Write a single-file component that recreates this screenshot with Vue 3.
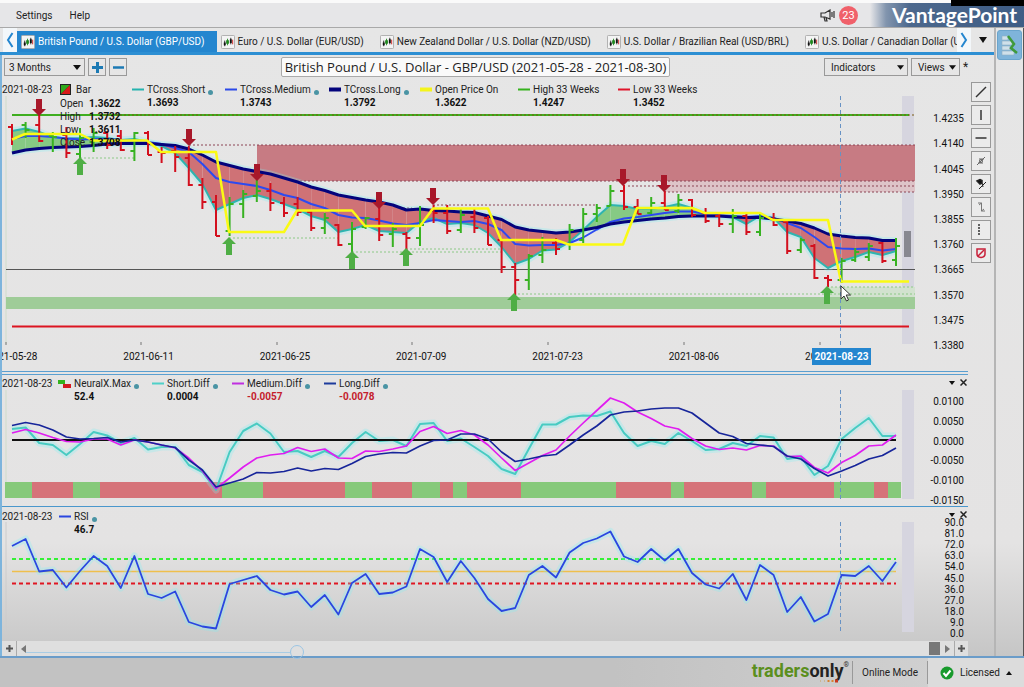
<script setup>
const STEP = 13.6
const START = 12
const px = (k) => START + k * STEP
const toPoints = (values) => values.map((y, k) => `${px(k).toFixed(1)},${y}`).join(' ')

const tabs = [
  'British Pound / U.S. Dollar (GBP/USD)',
  'Euro / U.S. Dollar (EUR/USD)',
  'New Zealand Dollar / U.S. Dollar (NZD/USD)',
  'U.S. Dollar / Brazilian Real (USD/BRL)',
  'U.S. Dollar / Canadian Dollar (USD/CAD)',
]

const ohlc = [['Open', '1.3622'], ['High', '1.3732'], ['Low', '1.3611'], ['Close', '1.3708']]
const priceLegend = [
  { name: 'TCross.Short', value: '1.3693', color: '#25b3ae', dot: true },
  { name: 'TCross.Medium', value: '1.3743', color: '#2b49e8', dot: true },
  { name: 'TCross.Long', value: '1.3792', color: '#04047c', dot: true, thick: true },
  { name: 'Open Price On', value: '1.3622', color: '#f4f41c', thick: true },
  { name: 'High 33 Weeks', value: '1.4247', color: '#35b21d' },
  { name: 'Low 33 Weeks', value: '1.3452', color: '#e0142a' },
]
const diffLegend = [
  { name: 'Short.Diff', value: '0.0004', color: '#4fd0c8' },
  { name: 'Medium.Diff', value: '-0.0057', color: '#c02fe0', negative: true },
  { name: 'Long.Diff', value: '-0.0078', color: '#1d3b9c', negative: true },
]

const priceTicks = ['1.4235', '1.4140', '1.4045', '1.3950', '1.3855', '1.3760', '1.3665', '1.3570', '1.3475', '1.3380']
const diffTicks = ['0.0100', '0.0050', '0.0000', '-0.0050', '-0.0100', '-0.0150']
const rsiTicks = ['90.0', '81.0', '72.0', '63.0', '54.0', '45.0', '36.0', '27.0', '18.0', '9.0', '0.0']
const dates = ['2021-05-28', '2021-06-11', '2021-06-25', '2021-07-09', '2021-07-23', '2021-08-06', '2021-08-20']
const dateMarks = [6, 141, 277, 412, 548, 684, 820]

const longLine = [153, 150, 148.5, 147.5, 147, 146.5, 145.5, 144, 143.5, 143.5, 143.5, 144.5, 145.5, 149, 155, 162, 165.5, 169, 171.5, 174, 178, 182, 187, 190.5, 195, 197.5, 200, 202, 205, 210, 209, 210.5, 211, 212, 212.5, 216, 219.5, 227, 230, 231.5, 233, 232, 230, 227.5, 224, 222, 220.5, 219, 218, 216.5, 216, 216, 216, 217, 217.5, 217.5, 219, 221, 223.5, 228, 234, 236, 237.5, 238, 240.5, 240.5]
const mediumLine = [139, 136, 136, 137, 138.5, 139.5, 139, 139, 140, 141, 142, 144, 148, 152, 164, 178, 182, 184, 186, 190, 195, 198, 204, 208, 215, 217.5, 218, 220.5, 223.5, 225, 223, 220, 221, 222, 221, 224, 230, 244, 245.5, 245, 245, 243, 237.5, 229.5, 222, 218.5, 217, 215, 213, 211.5, 211.5, 214, 215, 216, 217, 216, 218, 223, 228, 237, 247, 248.5, 249, 248.5, 250.5, 249]
const shortLine = [131, 128.5, 132, 137, 138.5, 138, 137, 138, 140, 139, 142, 146, 153, 168, 184, 210, 204, 198, 195, 199, 204, 209, 216, 220, 232, 229, 225, 231, 232, 233, 222, 218, 224, 223, 225, 233, 247, 264, 259, 250.5, 249.5, 242, 230, 217, 205, 206, 209, 209, 207, 204, 208, 214, 216, 217, 224, 216, 218, 232, 237, 258, 268, 261, 257, 252, 255, 251]
const openLine = '12,139.5 25,134 80,134 93,140.5 147,140.5 161,152 216,152 229,232 284,232 297,210.5 352,210.5 365,226 420,226 433,208.5 488,208.5 501,240 556,240 569,244.5 623,244.5 637,208 692,208 705,213 760,213 773,220 828,220 841,281.5 909,281.5'

const ribbons = longLine.slice(0, -1).map((y, k) => ({
  points: `${px(k)},${y} ${px(k + 1)},${longLine[k + 1]} ${px(k + 1)},${shortLine[k + 1]} ${px(k)},${shortLine[k]}`,
  up: shortLine[k] + shortLine[k + 1] < y + longLine[k + 1],
}))

// [direction, high, low, open tick, close tick]
const bars = [
  ['r', 124, 145, 127, 0], ['g', 122, 138, 125, 130], ['r', 115, 142, 125, 141], ['g', 132, 152, 136, 137],
  ['r', 127, 158, 135, 153], ['g', 128, 158, 154, 138], ['g', 128, 152, 142, 133], ['r', 131, 149, 133, 145],
  ['r', 130, 151, 136, 150], ['g', 132, 161, 151, 133], ['r', 131, 155, 133, 155], ['r', 147, 163, 152, 153],
  ['r', 146, 172, 151, 157], ['r', 146, 186, 158, 185], ['r', 178, 209, 185, 202], ['r', 195, 236, 202, 236],
  ['g', 197, 236, 231, 204], ['g', 190, 218, 204, 194], ['g', 180, 202, 196, 191], ['r', 183, 211, 191, 203],
  ['r', 197, 217, 203, 213], ['r', 197, 216, 204, 212], ['r', 211, 231, 212, 228], ['g', 213, 234, 228, 218],
  ['r', 224, 246, 225, 245], ['g', 222, 254, 244, 229], ['g', 217, 229, 227, 218], ['r', 204, 241, 219, 235],
  ['g', 223, 247, 234, 229], ['r', 232, 250, 234, 238], ['g', 206, 246, 238, 225], ['r', 205, 223, 210, 213],
  ['r', 205, 234, 213, 231], ['g', 209, 233, 230, 215], ['r', 208, 233, 217, 228], ['r', 216, 245, 218, 245],
  ['r', 240, 273, 240, 267], ['r', 263, 295, 267, 280], ['g', 254, 290, 280, 256], ['g', 237, 263, 255, 250],
  ['r', 238, 255, 243, 249], ['g', 224, 250, 244, 230], ['g', 208, 243, 240, 214], ['g', 204, 222, 214, 208],
  ['g', 185, 206, 206, 191], ['r', 185, 210, 191, 207], ['r', 199, 214, 207, 214], ['g', 197, 214, 213, 203],
  ['r', 191, 210, 203, 210], ['g', 194, 213, 211, 200], ['r', 199, 217, 200, 215], ['r', 208, 223, 213, 221],
  ['r', 214, 227, 216, 224], ['g', 209, 233, 224, 216], ['r', 212, 235, 216, 232], ['g', 213, 236, 232, 218],
  ['r', 213, 226, 219, 225], ['r', 221, 254, 222, 251], ['g', 238, 253, 250, 240], ['r', 244, 279, 246, 278],
  ['r', 275, 287, 278, 280], ['g', 258, 283, 280, 261], ['g', 248, 262, 260, 252], ['g', 243, 261, 257, 246],
  ['r', 242, 263, 243, 261], ['g', 238, 266, 260, 246],
]
const barPath = (bar, k) => {
  const x = px(k)
  let d = `M${x} ${bar[1]}V${bar[2]}`
  if (bar[3]) d += `M${x - 4} ${bar[3]}H${x}`
  if (bar[4]) d += `M${x} ${bar[4]}H${x + 4}`
  return d
}

const downArrows = [[39, 116], [189, 146], [257, 181], [379, 209], [433, 205], [623, 186], [664, 192]]
const upArrows = [[80, 157], [229, 237], [352, 251], [406, 248], [514, 293], [827, 286]]

const shortDiff = [429, 427.5, 443, 445, 455, 444, 432, 435.5, 443, 438, 449.5, 447, 447, 465, 472, 490, 452, 431, 423.5, 433.5, 452, 451, 457, 451, 457, 443, 432, 441, 440, 446, 424, 423, 441, 438.5, 447, 456, 469, 474, 449, 424.5, 424.5, 417, 415.5, 416, 411.5, 433, 446, 441, 444, 433, 441, 450, 449, 443, 446, 436, 437.5, 459, 457, 475, 466, 439, 428, 418, 436, 436]
const mediumDiff = [433, 429.5, 433, 437.5, 441.5, 442, 439, 439, 445, 440, 442, 445, 448, 458, 471, 488.5, 478, 467, 458, 455, 453.5, 447.5, 451.5, 449, 458, 458.5, 451, 451.5, 449, 446, 431.5, 426.5, 433.5, 430.5, 435, 445, 458, 470.5, 463, 455.5, 450, 436, 423, 410.5, 398, 403, 412, 418.5, 426, 429, 438.5, 446, 449.5, 448, 450, 445.5, 446, 456.5, 456, 467.5, 473, 462.5, 455.5, 446, 445, 435]
const longDiff = [425.5, 422.5, 425, 430, 437, 439, 438.5, 437.5, 442, 440, 442, 445, 447.5, 460, 470, 487, 483, 479, 472.5, 473, 471.5, 468, 471, 468.5, 469.5, 463.5, 456.5, 454, 452.5, 453, 446, 440.5, 440, 434, 434, 439, 452, 461.5, 459, 456, 454.5, 445, 435, 426, 415, 412, 411, 409, 408, 408, 413, 423, 433, 436.5, 443.5, 445, 446.5, 456, 459, 468.5, 476, 471, 465.5, 459, 455.5, 448]
const rsi = [546, 539, 571.5, 570, 587.5, 571, 556, 566, 588, 556, 594, 598, 591.5, 622, 626.5, 628.5, 584, 580, 576, 590, 594.5, 591.5, 607, 595, 614.5, 583, 574, 594, 592.5, 586.5, 549, 557, 582, 561, 578, 599, 611, 608, 575, 566, 577.5, 552.5, 543, 538.5, 531.5, 556.5, 562, 549, 560.5, 549, 573, 584.5, 588.5, 574, 600, 565, 575, 612, 597, 621.5, 614, 575, 576, 566, 581, 562]

const edges = [5, 32, 73, 100, 222, 263, 345, 372, 412, 440, 453, 467, 521, 616, 671, 684, 752, 766, 834, 874, 888, 901]
const strip = edges.slice(0, -1).map((x, i) => ({ x, w: edges[i + 1] - x, up: i % 2 === 0 }))

const tools = ['Trend line', 'Vertical line', 'Horizontal line', 'Regression', 'Pin', 'Step', 'Levels', 'Clear']
</script>

<template>
  <div class="app">
    <header class="menu">
      <nav>
        <button>Settings</button>
        <button>Help</button>
      </nav>
      <button class="news" aria-label="News">
        <svg width="15" height="13" viewBox="0 0 15 13"><path d="M1 4h4l5-3v9L5 8H1zM4 8l1 4h2L6 8.500M12 3v5M14 2v7" fill="none" stroke="#333" stroke-width="1.200" /></svg>
        <span class="count">23</span>
      </button>
      <div class="brand">VantagePoint</div>
      <div class="cover"></div>
    </header>

    <div class="body">
      <div class="workspace">
        <div class="tabs">
          <button class="nav-arrow" aria-label="Previous tabs">
            <svg width="8" height="18" viewBox="0 0 8 18"><path d="M6.500 2L2 9l4.500 7" fill="none" stroke="#2486cf" stroke-width="2" /></svg>
          </button>
          <div class="tab-list">
            <button v-for="(tab, i) in tabs" :key="tab" class="tab" :class="{ active: i === 0 }">
              <svg width="14" height="14" viewBox="0 0 15 15">
                <rect x=".5" y=".5" width="14" height="14" rx="1" fill="#f4f4f4" stroke="#aaa" />
                <path d="M4 6v6M10.500 3v7" stroke="#222" stroke-width="1" />
                <path d="M3 8h2v3H3zM9.500 4.500h2v4h-2z" fill="#111" />
                <path d="M7 4v7M6 6h2v3H6z" fill="#258a25" stroke="#258a25" />
                <path d="M12.500 5v5" stroke="#c22" />
              </svg>
              <span>{{ tab }}</span>
            </button>
          </div>
          <button class="nav-arrow" aria-label="Next tabs">
            <svg width="8" height="18" viewBox="0 0 8 18"><path d="M1.500 2L6 9l-4.500 7" fill="none" stroke="#2486cf" stroke-width="2" /></svg>
          </button>
          <button class="tab-menu" aria-label="All tabs">
            <svg width="8" height="6" viewBox="0 0 8 6"><path d="M0 0h8L4 6z" fill="#111" /></svg>
          </button>
        </div>

        <div class="content">
          <main>
            <div class="toolbar">
              <div class="pick period">
                <select aria-label="Period"><option>3 Months</option></select>
                <svg width="8" height="5" viewBox="0 0 8 5"><path d="M0 0h8L4 5z" fill="#111" /></svg>
              </div>
              <button class="square" aria-label="Zoom in"><svg width="11" height="11" viewBox="0 0 11 11"><path d="M0 5.500h11M5.500 0v11" stroke="#1c7ab4" stroke-width="3" /></svg></button>
              <button class="square" aria-label="Zoom out"><svg width="11" height="11" viewBox="0 0 11 11"><path d="M0 5.500h11" stroke="#1c7ab4" stroke-width="2.500" /></svg></button>
              <h1>British Pound / U.S. Dollar - GBP/USD (2021-05-28 - 2021-08-30)</h1>
              <div class="pick indicators">
                <select aria-label="Indicators"><option>Indicators</option></select>
                <svg width="7" height="5" viewBox="0 0 8 5"><path d="M0 0h8L4 5z" fill="#111" /></svg>
              </div>
              <div class="pick views">
                <select aria-label="Views"><option>Views</option></select>
                <svg width="7" height="5" viewBox="0 0 8 5"><path d="M0 0h8L4 5z" fill="#111" /></svg>
              </div>
              <span class="star">*</span>
            </div>

            <section class="panel price">
              <div class="plot">
                <svg class="chart" viewBox="2 79 916 267" preserveAspectRatio="none">
                  <path d="M6 96V344" stroke="#cfdccb" />
                  <rect x="902" y="96" width="12" height="248" class="future" />
                  <rect x="257" y="145" width="658" height="36" fill="#c77b83" />
                  <rect x="664" y="181" width="251" height="11" fill="#dec4c8" />
                  <rect x="827" y="287" width="88" height="10" fill="#d2e2cf" />
                  <rect x="6" y="297" width="909" height="12" fill="#9fcc98" />
                  <path class="dots dark" d="M189 145H915M240 181H915M628 186H915M664 192H915M379 208H412M433 205H596" />
                  <path class="dots light" d="M80 158H134M229 238H338M352 252H502M406 249H502M514 294H915M827 287H915" />
                  <path d="M6 269.500H915" stroke="#555" stroke-width="1.200" />
                  <path d="M12 115H909" stroke="#3fae20" stroke-width="2" />
                  <path class="dots" d="M100 115H915" stroke="#7a5a10" />
                  <path d="M12 326.500H909" stroke="#dc1421" stroke-width="2" />
                  <polyline class="glow" :points="toPoints(longLine)" />
                  <polyline class="glow" :points="toPoints(shortLine)" />
                  <polygon v-for="(r, i) in ribbons" :key="i" :points="r.points" :fill="r.up ? '#86ca84' : '#cf7276'" />
                  <polyline class="line" :points="toPoints(shortLine)" stroke="#2fb4b0" stroke-width="2" />
                  <polyline class="line" :points="toPoints(mediumLine)" stroke="#2c4af0" stroke-width="2" />
                  <polyline class="line" :points="toPoints(longLine)" stroke="#04047c" stroke-width="3" />
                  <path v-for="(bar, k) in bars" :key="k" :d="barPath(bar, k)" :stroke="bar[0] === 'r' ? '#d3101e' : '#38b222'" stroke-width="2" fill="none" />
                  <polyline class="line" :points="openLine" stroke="#fafa14" stroke-width="2.500" />
                  <path v-for="a in downArrows" :key="'d' + a[0]" :d="`M${a[0]} ${a[1]}l-7 -7h4v-10h6v10h4z`" fill="#a8182a" />
                  <path v-for="a in upArrows" :key="'u' + a[0]" :d="`M${a[0]} ${a[1]}l-7 7h4v11h6v-11h4z`" fill="#4fae45" />
                  <rect x="904" y="231" width="7" height="26" fill="#888890" />
                  <path class="guide" d="M840.500 96V345" />
                  <path v-for="x in dateMarks" :key="x" :d="`M${x} 345v-3`" stroke="#777" />
                  <path d="M841 286v13l3-3 2.500 5 2-1-2.300-5h4.300z" fill="#fff" stroke="#333" />
                </svg>
                <div class="dates">
                  <span v-for="d in dates" :key="d">{{ d }}</span>
                  <strong class="picked">2021-08-23</strong>
                </div>
                <div class="legend price-legend">
                  <span>2021-08-23</span>
                  <div class="bar-item">
                    <svg width="11" height="11" viewBox="0 0 11 11"><path d="M0 0h11v11H0z" fill="#222" /><path d="M1 1h9l-9 9z" fill="#30a81c" /><path d="M10 1v9H1z" fill="#d81a1a" /></svg>
                    <span>Bar</span>
                    <dl><template v-for="row in ohlc" :key="row[0]"><dt>{{ row[0] }}</dt><dd>{{ row[1] }}</dd></template></dl>
                  </div>
                  <div v-for="item in priceLegend" :key="item.name" class="item">
                    <svg width="12" height="5" viewBox="0 0 12 5"><path d="M0 2.500h12" :stroke="item.color" :stroke-width="item.thick ? 4 : 2" /></svg>
                    <span>{{ item.name }}</span><i v-if="item.dot"></i>
                    <b>{{ item.value }}</b>
                  </div>
                </div>
              </div>
              <div class="axis"><span v-for="t in priceTicks" :key="t">{{ t }}</span></div>
            </section>

            <section class="panel diff">
              <div class="plot">
                <svg class="chart" viewBox="2 375 916 131" preserveAspectRatio="none">
                  <path d="M6 390V498" stroke="#cfdccb" />
                  <rect x="902" y="390" width="12" height="109" class="future" />
                  <rect v-for="s in strip" :key="s.x" :x="s.x" y="482" :width="s.w" height="16" :fill="s.up ? '#86c97a' : '#d67379'" />
                  <polyline class="glow" :points="toPoints(shortDiff)" />
                  <polyline class="line" :points="toPoints(shortDiff)" stroke="#48cbc2" stroke-width="2" />
                  <path d="M12 440H896" stroke="#111" stroke-width="2" />
                  <polyline class="line" :points="toPoints(mediumDiff)" stroke="#e01df0" stroke-width="1.700" />
                  <polyline class="line" :points="toPoints(longDiff)" stroke="#17259a" stroke-width="1.700" />
                  <path class="guide" d="M840.500 390V499" />
                </svg>
                <div class="legend diff-legend">
                  <span>2021-08-23</span>
                  <div class="item">
                    <svg width="13" height="8" viewBox="0 0 13 8"><path d="M0 0h7v4H0z" fill="#35b21d" /><path d="M5 4h8v4H5z" fill="#d4181f" /></svg>
                    <span>NeuralX.Max</span><i></i>
                    <b>52.4</b>
                  </div>
                  <div v-for="item in diffLegend" :key="item.name" class="item">
                    <svg width="12" height="5" viewBox="0 0 12 5"><path d="M0 2.500h12" :stroke="item.color" stroke-width="2" /></svg>
                    <span>{{ item.name }}</span><i></i>
                    <b :class="{ negative: item.negative }">{{ item.value }}</b>
                  </div>
                </div>
              </div>
              <div class="axis"><span v-for="t in diffTicks" :key="t">{{ t }}</span></div>
              <div class="panel-actions">
                <button aria-label="Panel menu"><svg width="6" height="4" viewBox="0 0 6 4"><path d="M0 0h6L3 4z" fill="#111" /></svg></button>
                <button aria-label="Close panel"><svg width="7" height="7" viewBox="0 0 7 7"><path d="M.5.5l6 6M6.500.5l-6 6" stroke="#222" stroke-width="1.500" /></svg></button>
              </div>
            </section>

            <section class="panel rsi">
              <div class="plot">
                <svg class="chart" viewBox="2 507 916 134" preserveAspectRatio="none">
                  <path d="M6 522V633" stroke="#ccc" />
                  <rect x="902" y="522" width="12" height="110" class="future" />
                  <path d="M12 559H896" stroke="#35f035" stroke-width="2" stroke-dasharray="4 3" />
                  <path d="M12 571.500H896" stroke="#efbf4d" stroke-width="1.500" />
                  <path d="M12 583.500H896" stroke="#e01622" stroke-width="2" stroke-dasharray="4 3" />
                  <polyline class="glow" :points="toPoints(rsi)" />
                  <polyline class="line" :points="toPoints(rsi)" stroke="#2a46e0" stroke-width="1.800" />
                  <path class="guide" d="M840.500 522V633" />
                </svg>
                <div class="legend rsi-legend">
                  <span>2021-08-23</span>
                  <div class="item">
                    <svg width="12" height="5" viewBox="0 0 12 5"><path d="M0 2.500h12" stroke="#2a46e0" stroke-width="2" /></svg>
                    <span>RSI</span><i></i>
                    <b>46.7</b>
                  </div>
                </div>
              </div>
              <div class="axis"><span v-for="t in rsiTicks" :key="t">{{ t }}</span></div>
              <div class="panel-actions">
                <button aria-label="Panel menu"><svg width="6" height="4" viewBox="0 0 6 4"><path d="M0 0h6L3 4z" fill="#111" /></svg></button>
                <button aria-label="Close panel"><svg width="7" height="7" viewBox="0 0 7 7"><path d="M.5.5l6 6M6.500.5l-6 6" stroke="#222" stroke-width="1.500" /></svg></button>
              </div>
            </section>

            <div class="scroller">
              <button aria-label="Expand left"><svg width="7" height="7" viewBox="0 0 7 7"><path d="M0 3.500h7M3.500 0v7" stroke="#555" stroke-width="2" /></svg></button>
              <button class="divided" aria-label="Scroll left"><svg width="5" height="8" viewBox="0 0 5 8"><path d="M5 0v8L0 4z" fill="#777" /></svg></button>
              <div class="track"><div class="thumb"></div></div>
              <button aria-label="Scroll right"><svg width="5" height="8" viewBox="0 0 5 8"><path d="M0 0v8l5-4z" fill="#777" /></svg></button>
              <button class="divided" aria-label="Expand right"><svg width="7" height="7" viewBox="0 0 7 7"><path d="M0 3.500h7M3.500 0v7" stroke="#555" stroke-width="2" /></svg></button>
              <div class="playback"><span></span></div>
            </div>
          </main>

          <aside class="tools">
            <button v-for="(t, i) in tools" :key="t" :aria-label="t">
              <svg width="14" height="14" viewBox="0 0 14 14" fill="none" stroke="#333" stroke-width="1.500">
                <path v-if="i === 0" d="M2 12L12 2" />
                <path v-else-if="i === 1" d="M7 2v10" />
                <path v-else-if="i === 2" d="M1.500 7h11" />
                <g v-else-if="i === 3" stroke="#666" stroke-width="1"><path d="M3 11l8-8M5 5h5M4 9h5" /><circle cx="7" cy="7" r="1.500" /></g>
                <g v-else-if="i === 4" stroke="#222"><path d="M3 4l3-1.500 2 1v2.500l-2 1z" fill="#111" /><path d="M5 12l7-7M8 6l1 4" stroke-width="1" /></g>
                <path v-else-if="i === 5" d="M4 3h3.500v8H11M5 5l2.500-2M10 9l-2.500 2" stroke="#777" stroke-width="1" />
                <path v-else-if="i === 6" d="M5 1v12" stroke-dasharray="2 1" />
                <g v-else stroke="#c8203a"><path d="M3 3h8v5q0 3-4 3.500Q3 11 3 8z" /><path d="M4 10l6-6" /></g>
              </svg>
            </button>
          </aside>
        </div>
      </div>

      <aside class="rail">
        <button aria-label="Market list">
          <svg width="18" height="22" viewBox="0 0 18 22">
            <path d="M1 2h6v4H1zM1 7h10v4H1zM1 12h8v4H1zM1 17h12v4H1z" fill="#cfe0ea" stroke="#8fb0c4" stroke-width=".6" />
            <path d="M7 2l6 8-3 4 6 5" fill="none" stroke="#3f9a3a" stroke-width="2.500" />
          </svg>
        </button>
      </aside>
    </div>

    <footer>
      <div class="logo">
        <div><span>traders</span><em>only</em></div><sup>®</sup>
        <svg width="20" height="4" viewBox="0 0 20 4"><path d="M1 2h1M5 2h1" stroke="#c9a15a" stroke-width="1" /><path d="M8.500 2h2M12.500 2h2" stroke="#d9822e" stroke-width="2" /><path d="M16 2h3" stroke="#c8381e" stroke-width="3" /></svg>
      </div>
      <span class="mode">Online Mode</span>
      <button class="licence">
        <svg width="14" height="14" viewBox="0 0 14 14"><circle cx="7" cy="7" r="6.500" fill="#189a2c" /><path d="M3.500 7l2.500 3 4.500-5.500" fill="none" stroke="#fff" stroke-width="2" /></svg>
        <span>Licensed</span>
        <svg width="6" height="4" viewBox="0 0 6 4"><path d="M0 4h6L3 0z" fill="#111" /></svg>
      </button>
    </footer>
  </div>
</template>

<style>
body { margin: 0; background: #c4c4c4; }
</style>

<style scoped>
.app { position: relative; display: flex; flex-direction: column; font: 10px/13px Roboto, "Open Sans", sans-serif; color: #222; background: #e5e5e5; overflow: hidden; }
button, select { font: inherit; color: inherit; margin: 0; padding: 0; border: 0; background: none; }
button { display: flex; align-items: center; justify-content: center; }
svg { display: block; flex: none; }

.menu { display: flex; align-items: stretch; height: 24px; border-top: 3px solid #fafafa; border-bottom: 1px solid #a9a9a9; background: #e6e6e8; }
.menu nav { display: flex; gap: 17px; padding-left: 16px; flex: 1; }
.news { gap: 4px; }
.count { width: 19px; height: 19px; border-radius: 50%; background: #f0606a; color: #fff; line-height: 19px; font-size: 11px; }
.brand { margin-left: 12px; padding-left: 22px; width: 132px; white-space: nowrap; background: linear-gradient(90deg, #e6e6e8, #8295ae 16px, #4b678c 40px, #3f5d85); color: #fff; font: bold 21px/24px Lato, sans-serif; }
.cover { position: absolute; top: 0; right: 0; width: 73px; height: 6px; background: #000; }

.body { display: flex; border-bottom: 2px solid #6a9cc9; background: linear-gradient(#e6e6e6 0, #e4e3e3 82%, #c6c6c6); }
.workspace { flex: 1; min-width: 0; display: flex; flex-direction: column; }
.tabs { display: flex; align-items: stretch; height: 24px; padding-left: 3px; border-bottom: 3px solid #2d8fd3; }
.tab-list { display: flex; flex: 1; min-width: 0; overflow: hidden; padding-top: 3px; }
.nav-arrow { width: 14px; background: #f3f7fa; }
.tab-menu { width: 23px; }
.tab { flex: none; gap: 3px; padding: 0 12px 0 4px; white-space: nowrap; }
.tab.active { background: #2486cf; color: #fff; }

.content { display: flex; }
main { flex: 1; min-width: 0; border-left: 2px solid #7db4dc; }
.toolbar { display: flex; align-items: center; height: 24px; gap: 3px; padding-left: 2px; }
.pick { position: relative; height: 18px; box-sizing: border-box; border: 1px solid #999; }
.pick select { width: 100%; height: 100%; appearance: none; padding: 0 6px; line-height: 15px; }
.pick svg { position: absolute; right: 3px; top: 6px; pointer-events: none; }
.period { width: 81px; }
.period select { padding-left: 4px; }
.indicators { width: 84px; }
.views { width: 49px; }
.square { width: 18px; height: 18px; border: 1px solid #999; box-sizing: border-box; }
h1 { margin: 0 auto; padding: 0 3px; height: 18px; border: 1px solid #aaa; border-radius: 2px; background: #fafafa; font: 400 13px/18px "Open Sans", sans-serif; white-space: nowrap; }
.star { width: 5px; font-size: 12px; }

.panel { position: relative; display: flex; }
.plot { position: relative; flex: 1; min-width: 0; overflow: hidden; }
.chart { width: 100%; }
.price { border-bottom: 4px double #5a9fd0; }
.price .chart { height: 267px; }
.diff { border-bottom: 1px solid #4a97cc; }
.diff .chart { height: 131px; }
.rsi .chart { height: 134px; }
.axis { width: 50px; box-sizing: border-box; padding-right: 4px; display: flex; flex-direction: column; text-align: right; color: #111; }
.axis span { flex: 1; min-height: 0; display: flex; align-items: center; justify-content: flex-end; }
.price .axis { padding-top: 27px; padding-bottom: 13px; }
.diff .axis { padding-top: 17px; margin-bottom: -4px; }
.rsi .axis { padding-top: 10px; padding-bottom: 2px; line-height: 11px; }
.panel-actions { position: absolute; top: 3px; right: 1px; display: flex; gap: 5px; }
.panel-actions button { height: 9px; }
.dates { position: relative; display: flex; height: 25px; margin-left: -58px; line-height: 21px; color: #111; }
.dates span { flex: 0 0 14%; text-align: center; }
.picked { position: absolute; left: 868px; top: 2px; width: 59px; height: 17px; line-height: 17px; text-align: center; background: #2486cf; color: #fff; }

.legend { position: absolute; top: 0; left: 0; right: 0; display: grid; white-space: nowrap; }
.price-legend { top: 4px; grid-template-columns: 58px 72px 93px 104px 91px 98px 100px 90px; }
.diff-legend { top: 2px; grid-template-columns: 56px 94px 80px 92px 90px; }
.rsi-legend { top: 3px; grid-template-columns: 57px 90px; }
.item { display: grid; grid-template-columns: auto auto 1fr; column-gap: 3px; align-content: start; align-items: center; }
.item b { grid-column: 2 / 4; color: #111; }
.item b.negative { color: #c4202c; }
.item i { width: 5px; height: 5px; margin-top: 5px; border-radius: 50%; background: #4a94a4; }
.bar-item { display: grid; grid-template-columns: auto 1fr; column-gap: 5px; align-items: center; }
.bar-item dl { grid-column: 1 / 3; display: grid; grid-template-columns: 29px auto; margin: 1px 0 0; }
dd { margin: 0; font-weight: 700; color: #111; }

.line { fill: none; stroke-linejoin: round; }
.glow { fill: none; stroke: #7eeff5; stroke-opacity: .28; stroke-width: 7; stroke-linejoin: round; }
.future { fill: #d6d5df; }
.dots { fill: none; stroke-dasharray: 2 2; }
.dots.dark { stroke: #8c4555; }
.dots.light { stroke: #8cc886; }
.guide { stroke: #6792c4; stroke-dasharray: 4 3; }

.scroller { position: relative; display: flex; height: 15px; background: #dfdfdf; }
.scroller button { width: 14px; }
.scroller .divided { border-left: 1px solid #aaa; }
.track { flex: 1; }
.thumb { width: 11px; height: 13px; margin: 1px 0 0 auto; background: #777; }
.playback { position: absolute; left: 24px; top: 11px; width: 264px; border-top: 1px solid #a9cce4; }
.playback span { position: absolute; right: -14px; top: -8px; width: 12px; height: 12px; border: 1px solid #9bc5e4; border-radius: 50%; }

.tools { width: 26px; padding-top: 27px; display: flex; flex-direction: column; gap: 3px; align-items: center; }
.tools button { width: 20px; height: 20px; box-sizing: border-box; border: 1px solid #999; background: #ebebeb; }
.rail { width: 27px; border-left: 2px solid #b5b5b5; border-right: 1px solid #555; }
.rail button { width: 25px; height: 30px; margin: 2px 0 0 1px; border-radius: 3px; box-sizing: border-box; border: 1px solid #6aa4cc; background: #7fb4da; }

footer { display: flex; align-items: stretch; justify-content: flex-end; height: 29px; background: linear-gradient(90deg, #c2c2c2 60%, #d4d4d4); }
.logo { position: relative; display: flex; font: bold 18px/25px Roboto, sans-serif; color: #5b8f1d; margin-right: 3px; }
.logo em { font-style: normal; color: #222; }
.logo sup { font: 7px/14px Roboto, sans-serif; color: #333; }
.logo svg { position: absolute; right: 10px; bottom: 4px; }
.mode { padding: 0 9px; border-left: 1px solid #999; border-right: 1px solid #999; margin: 3px 0; line-height: 23px; }
.licence { width: 96px; gap: 6px; background: #dcdcdc; }
</style>
